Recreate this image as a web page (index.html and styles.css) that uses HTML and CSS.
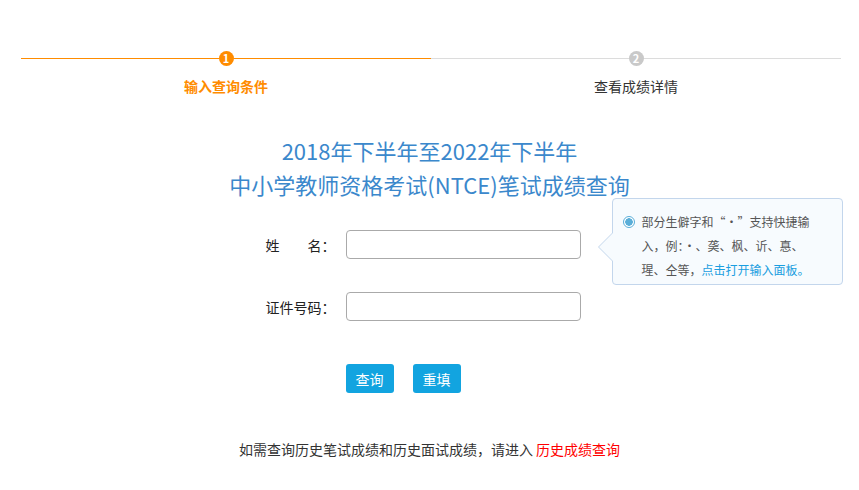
FILE: index.html
```html
<!DOCTYPE html>
<html lang="zh-CN">
<head>
  <meta charset="UTF-8" />
  <meta name="viewport" content="width=device-width, initial-scale=1.0"/>
  <title>中小学教师资格考试笔试成绩查询</title>
  <link rel="stylesheet" href="styles.css">
</head>
<body>

  <div class="steps">
    <div class="step active">
      <div class="bar"><span class="num">1</span></div>
      <div class="step-name">输入查询条件</div>
    </div>
    <div class="step">
      <div class="bar"><span class="num">2</span></div>
      <div class="step-name">查看成绩详情</div>
    </div>
  </div>

  <h1 class="title">2018年下半年至2022年下半年<br>中小学教师资格考试(NTCE)笔试成绩查询</h1>

  <form class="form" onsubmit="return false">
    <div class="row">
      <label class="label" for="xm">姓&emsp;&emsp;名：</label>
      <input class="field" type="text" id="xm">
    </div>
    <div class="row">
      <label class="label" for="zjhm">证件号码：</label>
      <input class="field" type="text" id="zjhm">
    </div>
    <div class="actions">
      <button class="btn" type="submit">查询</button>
      <button class="btn" type="reset">重填</button>
    </div>

    <div class="tip">
      <span class="radio"></span>
      <p class="tip-text">部分生僻字和“·”支持快捷输入，例：·、䶮、枫、䜣、惪、瑆、仝等，<a href="#" class="tip-link">点击打开输入面板。</a></p>
    </div>
  </form>

  <p class="history">如需查询历史笔试成绩和历史面试成绩，请进入 <a href="#">历史成绩查询</a></p>

</body>
</html>
```

FILE: styles.css
```css
body {
  margin: 0;
  font-family: "Noto Sans CJK SC", "Liberation Sans", sans-serif;
  font-size: 14px;
  color: #333;
  background: #fff;
}
.steps {
  display: flex;
  padding: 51px 18px 0 21px;
}
.step {
  flex: 1;
  display: flex;
  flex-direction: column;
  align-items: center;
}
.bar {
  width: 100%;
  height: 15px;
  display: flex;
  align-items: center;
}
.bar::before,
.bar::after {
  content: "";
  flex: 1;
  height: 1px;
  background: #dcdcdc;
}
.num {
  width: 15px;
  height: 15px;
  border-radius: 50%;
  background: #c9c9c9;
  color: #fff;
  font-size: 11px;
  font-weight: bold;
  line-height: 15px;
  text-align: center;
}
.step.active .bar::before,
.step.active .bar::after,
.step.active .num {
  background: #ff8c00;
}
.step-name {
  margin-top: 10px;
  line-height: 20px;
  color: #333;
}
.step.active .step-name {
  color: #ff8c00;
  font-weight: bold;
}
.title {
  margin: 37px 0 0;
  text-align: center;
  font-size: 22px;
  font-weight: normal;
  line-height: 34px;
  color: #3b88cc;
}
.form {
  position: relative;
  width: 328px;
  margin: 29px auto 0;
}
.row {
  display: flex;
  align-items: center;
  margin-bottom: 33px;
}
.label {
  width: 80px;
  line-height: 20px;
  color: #222;
}
.field {
  box-sizing: border-box;
  width: 235px;
  height: 29px;
  margin: 0;
  padding: 0 8px;
  border: 1px solid #aaa;
  border-radius: 4px;
  background: #fff;
  font: inherit;
}
.actions {
  display: flex;
  gap: 19px;
  padding-left: 80px;
  margin-top: 43px;
}
.btn {
  width: 48px;
  height: 29px;
  padding: 0;
  border: none;
  border-radius: 3px;
  background: #12a4e0;
  color: #fff;
  font: inherit;
  cursor: pointer;
}
.tip {
  position: absolute;
  left: 346px;
  top: -32px;
  box-sizing: border-box;
  width: 231px;
  height: 87px;
  display: flex;
  gap: 7px;
  padding: 11px 0 0 10px;
  border: 1px solid #c3d6ec;
  border-radius: 4px;
  background: #f7fbfe;
}
.tip::before,
.tip::after {
  content: "";
  position: absolute;
  top: 33px;
  width: 0;
  height: 0;
  border-style: solid;
  border-color: transparent;
}
.tip::before {
  left: -15px;
  border-width: 15px 15px 15px 0;
  border-right-color: #c3d6ec;
}
.tip::after {
  left: -14px;
  border-width: 15px 15px 15px 0;
  border-right-color: #f7fbfe;
}
.radio {
  flex: none;
  box-sizing: border-box;
  width: 12px;
  height: 12px;
  margin-top: 6px;
  border: 1px solid #5aaed8;
  border-radius: 50%;
  background: radial-gradient(circle, #5aaed8 0 3.5px, #fff 4px);
}
.tip-text {
  width: 176px;
  margin: 0;
  font-size: 12px;
  line-height: 24px;
  color: #555;
}
.tip-link {
  color: #1a9ee0;
  text-decoration: none;
}
.history {
  margin: 46px 0 0;
  text-align: center;
  line-height: 20px;
  color: #333;
}
.history a {
  color: #f00;
  text-decoration: none;
}
```
